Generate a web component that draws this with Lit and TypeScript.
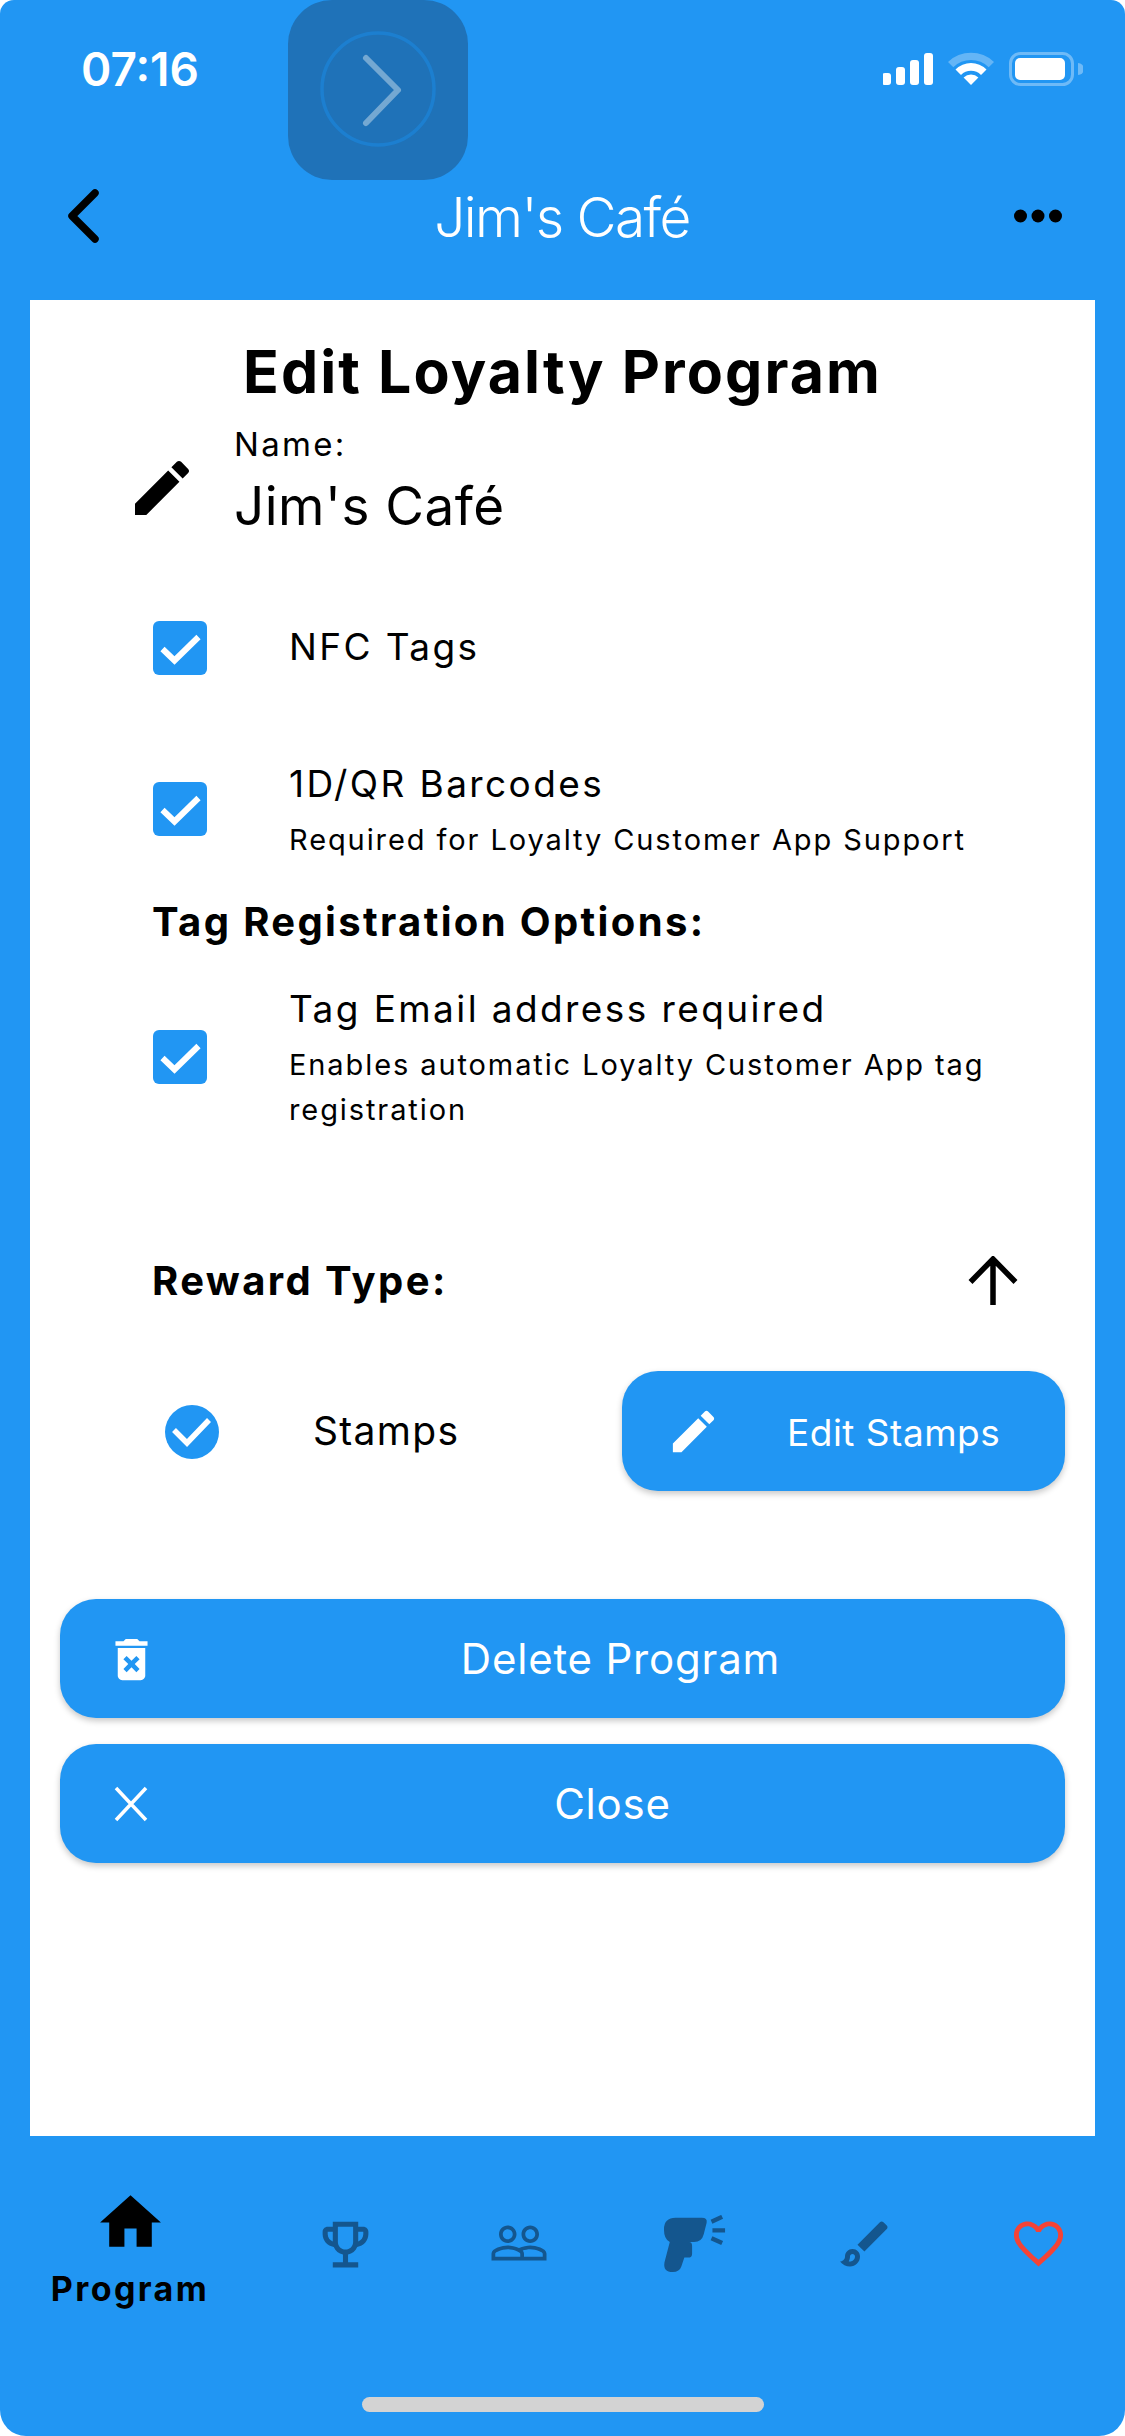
import { LitElement, html, css } from "lit";
import { customElement } from "lit/decorators.js";

const EDIT = "M3 17.25V21h3.75L17.81 9.94l-3.75-3.75L3 17.25zM20.71 7.04c.39-.39.39-1.02 0-1.41l-2.34-2.34c-.39-.39-1.02-.39-1.41 0l-1.83 1.83 3.75 3.75 1.83-1.83z";
const icon = (d: string, cls: string) => html`<svg class=${cls} viewBox="0 0 24 24"><path d=${d}></path></svg>`;
const checkbox = html`<svg class="check" viewBox="0 0 54 54"><rect width="54" height="54" rx="6" fill="#2196f3"></rect><path d="M9.5 28 21.5 39.5 45.5 16" fill="none" stroke="#fff" stroke-width="6"></path></svg>`;

@customElement("app-root")
export class AppRoot extends LitElement {
  static styles = css`
    :host { display: block; width: 1125px; height: 2436px; background: #fff; font-family: Inter, "Liberation Sans", sans-serif; color: #000; }
    * { box-sizing: border-box; }
    .screen { position: relative; width: 1125px; height: 2436px; background: #2196f3; border-radius: 14px 14px 26px 26px; display: flex; flex-direction: column; overflow: hidden; }
    .top { height: 300px; flex: none; display: flex; flex-direction: column; }
    .status { height: 180px; padding: 46px 42px 0 81px; display: flex; justify-content: space-between; align-items: flex-start; }
    .time { color: #fff; font-size: 46px; font-weight: 600; line-height: 46px; letter-spacing: 0; }
    .status-icons { display: block; width: 200px; height: 42px; margin-top: 6px; }
    .siri { position: absolute; left: 288px; top: 0; width: 180px; height: 180px; }
    .nav { display: flex; align-items: center; justify-content: space-between; padding: 0 63px 0 64px; height: 72px; }
    .nav svg { display: block; }
    .nav-title { color: #fff; font-size: 55px; font-weight: 300; letter-spacing: -1.6px; line-height: 72px; margin-left: 6px; padding-top: 2px; }
    .card { flex: none; height: 1836px; margin: 0 30px; background: #fff; display: flex; flex-direction: column; position: relative; }
    h1 { margin: 30px 0 0; text-align: center; font-size: 59px; line-height: 84px; font-weight: 700; letter-spacing: 2.1px; }
    .name-row { margin: 6px 0 0 96px; display: flex; align-items: center; height: 120px; }
    .pencil { width: 72px; height: 72px; fill: #000; flex: none; margin-top: 16px; }
    .name-text { margin-left: 36px; padding-top: 6px; }
    .name-label { font-size: 33px; line-height: 46px; letter-spacing: 2.3px; }
    .name-value { font-size: 53px; line-height: 78px; font-weight: 400; letter-spacing: 0.5px; }
    .opt { display: flex; align-items: center; margin-left: 123px; }
    .check { width: 54px; height: 54px; flex: none; display: block; }
    .opt-text { margin-left: 82px; width: 760px; }
    .opt-title { font-size: 37px; line-height: 54px; letter-spacing: 2.400px; }
    .opt-sub { font-size: 29px; line-height: 45px; letter-spacing: 1.900px; }
    .opt-title + .opt-sub { margin-top: 6px; }
    .opt-nfc { margin-top: 61px; height: 94px; }
    .opt-nfc .opt-title { margin-top: -2px; }
    .opt-bar { margin-top: 59px; height: 110px; }
    .section { margin: 28px 0 0 122px; font-size: 40px; line-height: 60px; font-weight: 700; letter-spacing: 2.350px; }
    .opt-tag { margin-top: 32px; height: 145px; }
    .reward { margin: 121px 60px 0 122px; height: 62px; display: flex; align-items: center; justify-content: space-between; font-size: 40px; line-height: 60px; font-weight: 700; letter-spacing: 2.400px; }
    .arrow { width: 50px; height: 50px; display: block; margin-right: 17px; }
    .stamps { margin: 59px 30px 0 135px; height: 120px; display: flex; align-items: center; }
    .radio { width: 54px; height: 54px; display: block; flex: none; margin-top: 2px; }
    .stamps-label { margin-left: 94px; font-size: 39px; letter-spacing: 1.300px; flex: 1; margin-top: -2px; }
    .btn { background: #2196f3; color: #fff; border-radius: 36px; box-shadow: 0 3px 6px rgba(0,0,0,.22); display: flex; align-items: center; position: relative; }
    .btn-edit { width: 443px; height: 120px; padding-left: 44px; flex: none; }
    .btn-edit svg { width: 55px; height: 55px; fill: #fff; display: block; }
    .btn-edit span { margin-left: 66px; font-size: 37px; letter-spacing: 0.500px; padding-top: 2px; }
    .btn-wide { margin: 0 30px; height: 119px; justify-content: center; font-size: 42px; letter-spacing: 0.800px; }
    .btn-wide svg { position: absolute; left: 41px; top: 30px; width: 60px; height: 60px; fill: #fff; }
    .btn-wide .trash { width: 55px; height: 55px; left: 44px; top: 33px; }
    .btn-del { margin-top: 108px; padding-left: 116px; }
    .btn-close { margin-top: 26px; padding-left: 100px; }
    .tabs { flex: 1; position: relative; display: flex; align-items: flex-start; }
    .tab { flex: none; display: flex; flex-direction: column; align-items: center; }
    .tab svg { display: block; }
    .tab-home { width: 260px; margin-top: 50px; }
    .tab-home svg { width: 73px; height: 73px; fill: #000; }
    .tab-home span { font-size: 34px; font-weight: 700; line-height: 42px; letter-spacing: 2.400px; margin-top: 9px; }
    .tab-i { fill: #14568e; }
    .homebar { position: absolute; left: 362px; top: 261px; width: 402px; height: 15px; border-radius: 8px; background: #d3d3d3; }
    .small { position: absolute; display: block; }
    .t1 { left: 315px; top: 78px; width: 61px; height: 61px; }
    .t2 { left: 489px; top: 77px; width: 60px; height: 60px; }
    .t3 { left: 663px; top: 79px; width: 64px; height: 58px; }
    .t4 { left: 835px; top: 78px; width: 60px; height: 60px; }
    .t5 { left: 1009px; top: 78px; width: 59px; height: 59px; }
  `;

  render() {
    return html`<div class="screen">
      <div class="top">
        <div class="status">
          <div class="time">07:16</div>
          <svg class="status-icons" viewBox="883 52 200 42">
            <g fill="#fff">
              <rect x="882" y="73" width="9" height="12" rx="3"></rect>
              <rect x="896" y="67" width="9" height="18" rx="3"></rect>
              <rect x="910" y="60" width="9" height="25" rx="3"></rect>
              <rect x="924" y="53" width="9" height="32" rx="3"></rect>
            </g>
            <path d="M948 62A33 33 0 0 1 994 62L988.700 67.300A25 25 0 0 0 953.300 67.300Z" fill="#fff" fill-opacity=".3"></path>
            <path d="M955.500 69.500A22 22 0 0 1 986.500 69.500L981 75A14 14 0 0 0 961 75Z" fill="#fff"></path>
            <path d="M963.600 77.600A10.500 10.500 0 0 1 978.400 77.600L971 85Z" fill="#fff"></path>
            <rect x="1010.500" y="53.500" width="62" height="31" rx="10" fill="none" stroke="#fff" stroke-opacity=".35" stroke-width="3"></rect>
            <rect x="1015" y="58" width="50" height="22" rx="5" fill="#fff"></rect>
            <path d="M1078 63a6 6 0 0 1 0 12z" fill="#fff" fill-opacity=".35"></path>
          </svg>
        </div>
        <div class="nav">
          <svg width="40" height="64" viewBox="0 0 40 64"><path d="M31 9 8 32 31 55" fill="none" stroke="#000" stroke-width="7.500" stroke-linecap="round" stroke-linejoin="round"></path></svg>
          <div class="nav-title">Jim's Café</div>
          <svg width="48" height="14" viewBox="0 0 48 14" fill="#000"><circle cx="6.500" cy="7" r="6.500"></circle><circle cx="24" cy="7" r="6.500"></circle><circle cx="41.500" cy="7" r="6.500"></circle></svg>
        </div>
      </div>
      <svg class="siri" viewBox="0 0 180 180">
        <rect width="180" height="180" rx="44" fill="#1f72b8"></rect>
        <circle cx="90" cy="89" r="56" fill="none" stroke="#1c7fd0" stroke-width="3.500"></circle>
        <path d="M78 58 110 90 78 123" fill="none" stroke="#74a8d2" stroke-width="6" stroke-linecap="round" stroke-linejoin="round"></path>
      </svg>

      <div class="card">
        <h1>Edit Loyalty Program</h1>
        <div class="name-row">
          ${icon(EDIT, "pencil")}
          <div class="name-text">
            <div class="name-label">Name:</div>
            <div class="name-value">Jim's Café</div>
          </div>
        </div>
        <div class="opt opt-nfc">${checkbox}<div class="opt-text"><div class="opt-title">NFC Tags</div></div></div>
        <div class="opt opt-bar">${checkbox}<div class="opt-text"><div class="opt-title">1D/QR Barcodes</div><div class="opt-sub">Required for Loyalty Customer App Support</div></div></div>
        <div class="section">Tag Registration Options:</div>
        <div class="opt opt-tag">${checkbox}<div class="opt-text"><div class="opt-title">Tag Email address required</div><div class="opt-sub">Enables automatic Loyalty Customer App tag registration</div></div></div>
        <div class="reward">
          <span>Reward Type:</span>
          <svg class="arrow" viewBox="0 0 50 50"><path d="M25 49V3M2.500 26 25 3 47.500 26" fill="none" stroke="#000" stroke-width="5.500"></path></svg>
        </div>
        <div class="stamps">
          <svg class="radio" viewBox="0 0 54 54"><circle cx="27" cy="27" r="27" fill="#2196f3"></circle><path d="M9 25 22 38 44 15" fill="none" stroke="#fff" stroke-width="5.500"></path></svg>
          <div class="stamps-label">Stamps</div>
          <div class="btn btn-edit">${icon(EDIT, "")}<span>Edit Stamps</span></div>
        </div>
        <div class="btn btn-wide btn-del">
          ${icon("M6 19c0 1.100.9 2 2 2h8c1.100 0 2-.9 2-2V7H6v12zm2.460-7.120l1.410-1.410L12 12.590l2.120-2.120 1.410 1.410L13.410 14l2.120 2.120-1.410 1.410L12 15.410l-2.120 2.120-1.410-1.410L10.590 14l-2.130-2.120zM15.500 4l-1-1h-5l-1 1H5v2h14V4z", "trash")}
          Delete Program
        </div>
        <div class="btn btn-wide btn-close">
          <svg viewBox="0 0 60 60"><path d="M15 14 45 46M45 14 15 46" fill="none" stroke="#fff" stroke-width="3.500"></path></svg>
          Close
        </div>
      </div>

      <div class="tabs">
        <div class="tab tab-home">${icon("M10 20v-6h4v6h5v-8h3L12 3 2 12h3v8z", "")}<span>Program</span></div>
        <svg class="small tab-i t1" viewBox="0 0 24 24"><path d="M19 5h-2V3H7v2H5c-1.100 0-2 .9-2 2v1c0 2.550 1.920 4.630 4.390 4.940.63 1.500 1.980 2.630 3.610 2.960V19H7v2h10v-2h-4v-3.100c1.630-.33 2.980-1.460 3.610-2.960C19.080 12.630 21 10.550 21 8V7c0-1.100-.9-2-2-2zM5 8V7h2v3.820C5.840 10.400 5 9.300 5 8zm7 6c-1.650 0-3-1.350-3-3V5h6v6c0 1.650-1.350 3-3 3zm7-6c0 1.300-.84 2.400-2 2.820V7h2v1z"></path></svg>
        <svg class="small tab-i t2" viewBox="0 0 24 24"><path d="M16.500 13c-1.200 0-3.070.34-4.500 1-1.430-.67-3.300-1-4.500-1C5.330 13 1 14.080 1 16.250V19h22v-2.750c0-2.170-4.330-3.250-6.500-3.250zm-4 4.500h-10v-1.250c0-.54 2.560-1.750 5-1.750s5 1.210 5 1.750v1.250zm9 0H14v-1.250c0-.46-.2-.86-.52-1.220.88-.3 1.960-.53 3.020-.53 2.440 0 5 1.210 5 1.750v1.250zM7.500 12c1.930 0 3.500-1.570 3.500-3.500S9.430 5 7.500 5 4 6.570 4 8.500 5.570 12 7.500 12zm0-5.500c1.100 0 2 .9 2 2s-.9 2-2 2-2-.9-2-2 .9-2 2-2zm9 5.500c1.930 0 3.500-1.570 3.500-3.500S18.430 5 16.500 5 13 6.570 13 8.500s1.570 3.500 3.500 3.500zm0-5.500c1.100 0 2 .9 2 2s-.9 2-2 2-2-.9-2-2 .9-2 2-2z"></path></svg>
        <svg class="small tab-i t3" viewBox="0 0 66 58">
          <path d="M13 2H40Q46 2 45 7L42 19Q40 27 32 27H27Q30 27 30 31V39Q30 43 26 43H22L19 52Q17 58 10 58Q0 58 1.500 48L7 27Q1 24 1 14Q1 2 13 2Z"></path>
          <path d="M50 6 61 1M51 15H64M50 23 61 28" fill="none" stroke="#14568e" stroke-width="4.500"></path>
        </svg>
        <svg class="small tab-i t4" viewBox="0 0 24 24"><path d="M7 16c.55 0 1 .45 1 1 0 1.100-.9 2-2 2-.17 0-.33-.02-.5-.05.31-.55.5-1.210.5-1.950 0-.55.45-1 1-1M18.670 3c-.26 0-.51.1-.71.29L9 12.250 11.750 15l8.960-8.960c.39-.39.39-1.020 0-1.410l-1.340-1.340c-.2-.2-.45-.29-.7-.29zM7 14c-1.660 0-3 1.340-3 3 0 1.310-1.160 2-2 2 .92 1.220 2.490 2 4 2 2.210 0 4-1.790 4-4 0-1.660-1.340-3-3-3z"></path></svg>
        <svg class="small t5" fill="#f44336" viewBox="0 0 24 24"><path d="M16.500 3c-1.740 0-3.410.81-4.500 2.090C10.910 3.810 9.240 3 7.500 3 4.420 3 2 5.420 2 8.500c0 3.780 3.400 6.860 8.550 11.540L12 21.350l1.450-1.320C18.600 15.360 22 12.280 22 8.500 22 5.420 19.580 3 16.500 3zm-4.400 15.550l-.1.1-.1-.1C7.140 14.240 4 11.390 4 8.500 4 6.500 5.500 5 7.500 5c1.540 0 3.040.99 3.570 2.360h1.870C13.460 5.990 14.960 5 16.500 5c2 0 3.500 1.500 3.500 3.500 0 2.890-3.140 5.740-7.900 10.050z"></path></svg>
        <div class="homebar"></div>
      </div>
    </div>`;
  }
}
